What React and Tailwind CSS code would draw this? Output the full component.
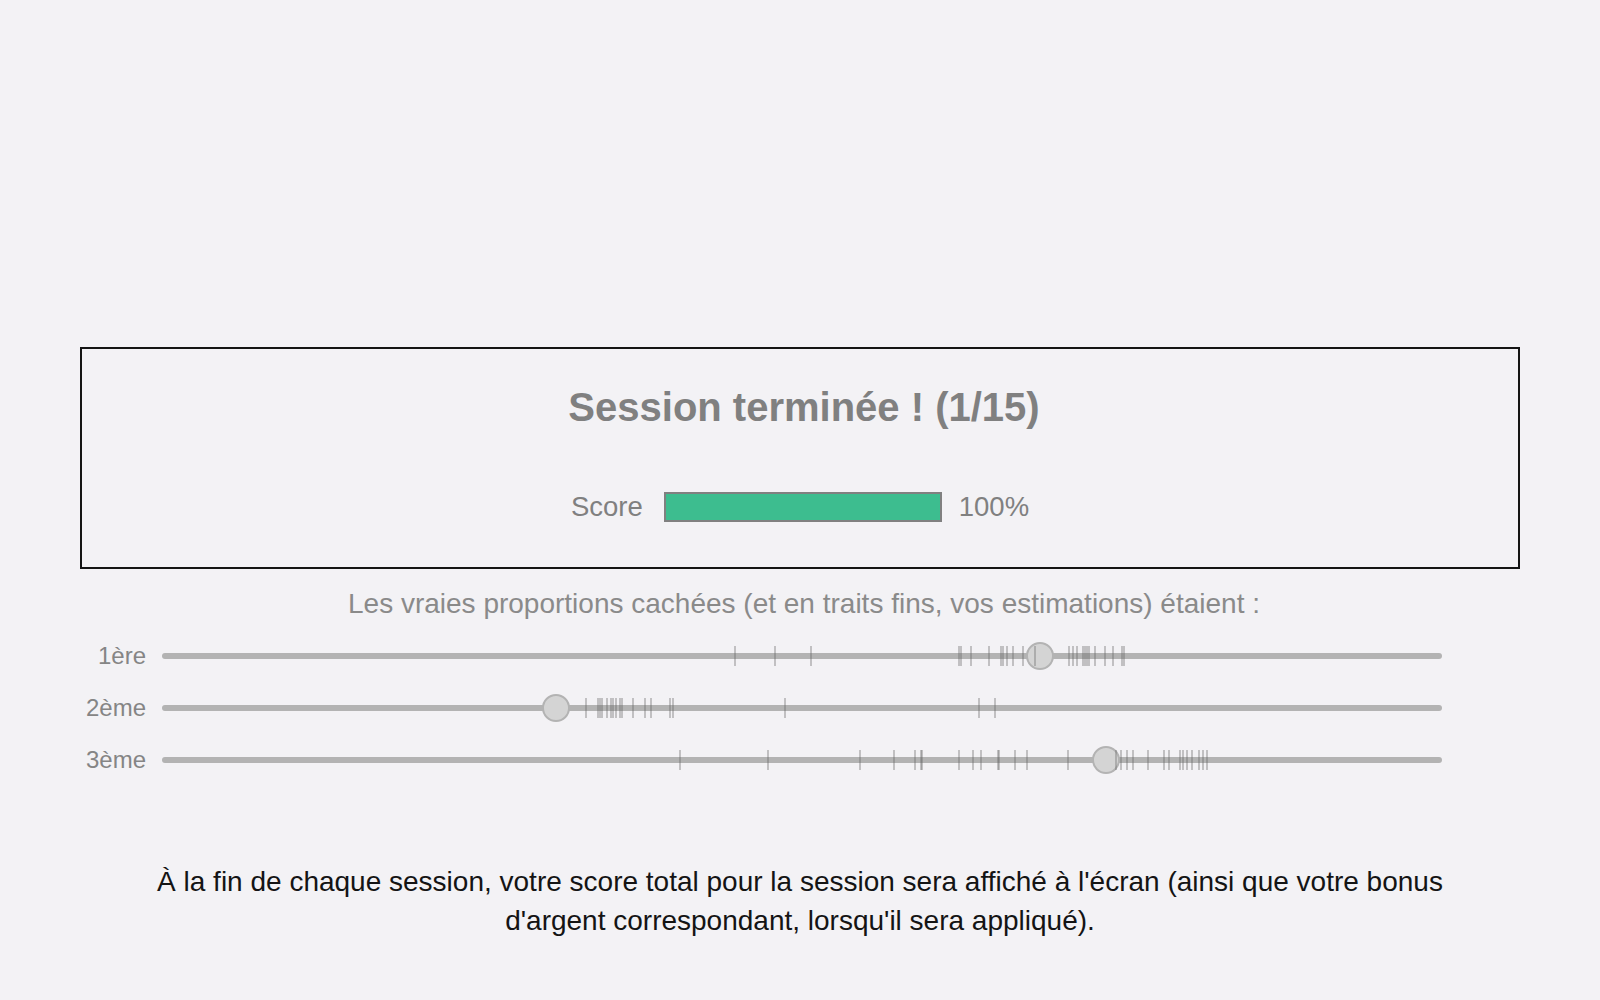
import React from 'react';

const TRACK_LEFT = 162;

const rows = [
    {
        label: '1ère',
        thumb: 1040,
        ticks: [735, 775, 811, 959, 961, 971, 989, 1001, 1003, 1007, 1013, 1023, 1035, 1069, 1073, 1077, 1083, 1085, 1087, 1089, 1095, 1105, 1113, 1122, 1124],
    },
    {
        label: '2ème',
        thumb: 556,
        ticks: [586, 598, 600, 602, 607, 611, 613, 616, 620, 622, 633, 645, 651, 670, 673, 785, 979, 995],
    },
    {
        label: '3ème',
        thumb: 1106,
        ticks: [680, 768, 860, 894, 915, 921, 922, 959, 973, 981, 998, 999, 1015, 1027, 1068, 1116, 1121, 1127, 1133, 1148, 1164, 1169, 1180, 1183, 1187, 1192, 1199, 1203, 1207],
    },
];

const ProportionRow = ({ label, thumb, ticks }) => {
    return (
        <div className="flex items-center h-[52px]">
            <div className="w-[146px] text-right text-[24px] leading-none text-[#858585]">{label}</div>
            <div className="relative ml-[16px] w-[1280px] h-[28px]">
                <div className="absolute left-0 right-0 top-[11px] h-[6px] rounded-full bg-[#b3b3b3]" />
                <div
                    className="absolute top-0 w-[28px] h-[28px] rounded-full bg-[#d4d4d4] border-2 border-[#b3b3b3]"
                    style={{ left: thumb - TRACK_LEFT - 14 }}
                />
                {ticks.map((x, i) => (
                    <div
                        key={i}
                        className="absolute top-[4px] w-[2px] h-[20px] bg-[rgba(100,100,100,0.35)]"
                        style={{ left: x - TRACK_LEFT - 1 }}
                    />
                ))}
            </div>
        </div>
    );
};

const App = () => {
    return (
        <div className="min-h-screen bg-[#f3f2f5] pt-[347px] font-['Liberation_Sans',Arial,sans-serif]">
            <div className="mx-[80px] h-[222px] border-2 border-[#141414] pt-[35px]">
                <h1 className="pl-[8px] text-center text-[40px] leading-[46px] font-bold text-[#808080]">
                    Session terminée ! (1/15)
                </h1>
                <div className="mt-[62px] flex items-center justify-center">
                    <span className="text-[27.5px] leading-none text-[#808080]">Score</span>
                    <div className="ml-[21px] w-[278px] h-[30px] border-2 border-[#808080] bg-[#3dbd8f]" />
                    <span className="ml-[17px] text-[27.5px] leading-none text-[#808080]">100%</span>
                </div>
            </div>

            <p className="mt-[19px] pl-[8px] text-center text-[28px] leading-[32px] text-[#8a8a8a]">
                Les vraies proportions cachées (et en traits fins, vos estimations) étaient :
            </p>

            <div className="mt-[10px]">
                {rows.map((row) => (
                    <ProportionRow key={row.label} {...row} />
                ))}
            </div>

            <p className="mx-auto mt-[76px] max-w-[1320px] text-center text-[28px] leading-[39px] text-[#141414]">
                À la fin de chaque session, votre score total pour la session sera affiché à l'écran (ainsi que votre bonus d'argent correspondant, lorsqu'il sera appliqué).
            </p>
        </div>
    );
};

export default App;
